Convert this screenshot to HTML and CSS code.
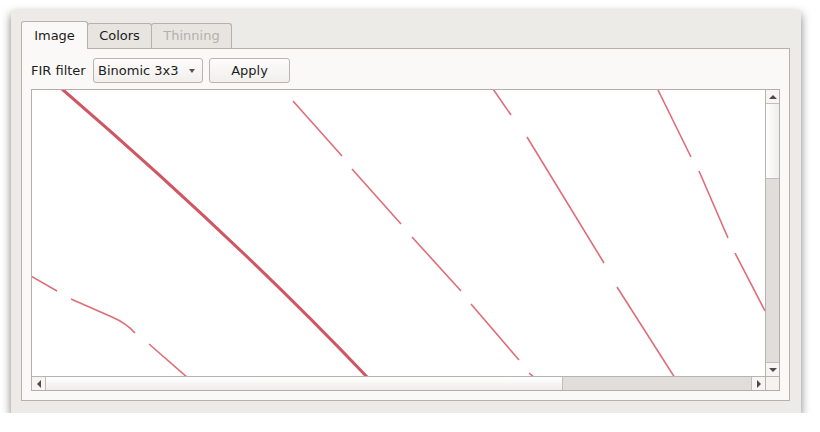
FILE: index.html
```html
<!DOCTYPE html>
<html>
<head>
<meta charset="utf-8">
<link rel="stylesheet" href="styles.css">
</head>
<body>
<div class="window">
  <div class="tabs">
    <div class="tab tab-image active">Image</div>
    <div class="tab tab-colors">Colors</div>
    <div class="tab tab-thinning disabled">Thinning</div>
  </div>
  <div class="pane">
    <div class="toolbar">
      <span class="label">FIR filter</span>
      <div class="combo"><span class="combo-text">Binomic 3x3</span><span class="caret"></span></div>
      <div class="button">Apply</div>
    </div>
    <div class="frame">
      <div class="viewport">
        <svg class="plot" width="733" height="286" viewBox="32 90 733 286">
          <path class="thick" d="M62,89 Q236,239 368,378"/>
          <g class="thin">
            <line x1="293" y1="101" x2="342" y2="156"/>
            <line x1="352" y1="169" x2="401" y2="224"/>
            <line x1="412" y1="237" x2="461" y2="291"/>
            <line x1="471" y1="304" x2="519" y2="360"/>
            <line x1="529" y1="373" x2="535" y2="378"/>
            <line x1="31" y1="276" x2="57" y2="291"/>
            <path d="M71,299 L112,317 Q126,323 135,333"/>
            <line x1="149" y1="344" x2="188" y2="378"/>
            <line x1="493" y1="89" x2="511" y2="115"/>
            <line x1="527" y1="137" x2="604" y2="263"/>
            <line x1="617" y1="287" x2="675" y2="378"/>
            <line x1="658" y1="90" x2="691" y2="157"/>
            <line x1="699" y1="171" x2="728" y2="238"/>
            <line x1="735" y1="253" x2="765" y2="311"/>
          </g>
        </svg>
      </div>
      <div class="vscroll">
        <div class="sb-btn up"><span class="arrow arrow-up"></span></div>
        <div class="v-handle"></div>
        <div class="v-track"></div>
        <div class="sb-btn down"><span class="arrow arrow-down"></span></div>
      </div>
      <div class="hscroll">
        <div class="sb-btn left"><span class="arrow arrow-left"></span></div>
        <div class="h-handle"></div>
        <div class="h-track"></div>
        <div class="sb-btn right"><span class="arrow arrow-right"></span></div>
      </div>
      <div class="corner"></div>
    </div>
  </div>
</div>
</body>
</html>
```
FILE: styles.css
```css
html, body {
  margin: 0;
  padding: 0;
  background: #ffffff;
}
body {
  font-family: "DejaVu Sans", "Liberation Sans", sans-serif;
  font-size: 13px;
  color: #1c1c1c;
}
.window {
  box-sizing: border-box;
  margin: 10px 0 0 11px;
  width: 790px;
  height: 403px;
  padding: 11px 11px 12px 10px;
  background: #edebe7;
  border-radius: 3px 3px 0 0;
  box-shadow: 0 4px 10px rgba(0, 0, 0, 0.5);
  display: flex;
  flex-direction: column;
}
.tabs {
  display: flex;
  align-items: flex-end;
  height: 27px;
  flex: none;
}
.tab {
  box-sizing: border-box;
  height: 25px;
  padding-top: 4px;
  line-height: 15px;
  text-align: center;
  border: 1px solid #b6b1ab;
  border-bottom: none;
  border-radius: 3px 3px 0 0;
  background: #e8e5e1;
  margin-left: -1px;
}
.tab-image { width: 67px; margin-left: 0; }
.tab-colors { width: 65px; }
.tab-thinning { width: 81px; }
.tab.active {
  height: 28px;
  padding-top: 6px;
  margin-bottom: -1px;
  background: #fbf9f7;
  position: relative;
  z-index: 1;
}
.tab.disabled {
  color: #b3afab;
}
.pane {
  box-sizing: border-box;
  flex: 1;
  border: 1px solid #b6b1ab;
  background: #fbf9f7;
  padding: 9px;
  display: flex;
  flex-direction: column;
  gap: 6px;
}
.toolbar {
  display: flex;
  align-items: center;
  height: 25px;
  line-height: 15px;
}
.label {
  width: 62px;
}
.combo {
  box-sizing: border-box;
  width: 110px;
  height: 25px;
  border: 1px solid #b9b4ae;
  border-radius: 3px;
  background: linear-gradient(#fdfcfb, #f1efec);
  display: flex;
  align-items: center;
  padding-left: 4px;
  padding-right: 7px;
}
.combo-text {
  flex: 1;
}
.caret {
  width: 0;
  height: 0;
  border-left: 3.5px solid transparent;
  border-right: 3.5px solid transparent;
  border-top: 4px solid #555350;
  margin-top: 1px;
}
.button {
  box-sizing: border-box;
  width: 81px;
  height: 25px;
  margin-left: 6px;
  border: 1px solid #b9b4ae;
  border-radius: 3px;
  background: linear-gradient(#fdfcfb, #f1efec);
  display: flex;
  align-items: center;
  justify-content: center;
}
.frame {
  box-sizing: border-box;
  width: 749px;
  height: 302px;
  border: 1px solid #b3aea8;
  display: grid;
  grid-template-columns: 733px 14px;
  grid-template-rows: 286px 14px;
  background: #ffffff;
}
.viewport {
  overflow: hidden;
  background: #ffffff;
}
.plot {
  display: block;
}
.thick {
  fill: none;
  stroke: #d05662;
  stroke-width: 3;
}
.thin line, .thin path {
  fill: none;
  stroke: #e06c77;
  stroke-width: 1.6;
}
.vscroll {
  box-sizing: border-box;
  border-left: 1px solid #b8b3ad;
  display: flex;
  flex-direction: column;
}
.hscroll {
  box-sizing: border-box;
  border-top: 1px solid #b8b3ad;
  display: flex;
}
.corner {
  box-sizing: border-box;
  border-left: 1px solid #b8b3ad;
  border-top: 1px solid #b8b3ad;
  background: #f5f3f0;
}
.sb-btn {
  box-sizing: border-box;
  flex: none;
  background: #f7f5f3;
  display: flex;
  align-items: center;
  justify-content: center;
}
.sb-btn.up { height: 14px; border-bottom: 1px solid #c2bdb8; }
.sb-btn.down { height: 14px; border-top: 1px solid #c2bdb8; }
.sb-btn.left { width: 14px; border-right: 1px solid #c2bdb8; }
.sb-btn.right { width: 14px; border-left: 1px solid #c2bdb8; }
.v-handle {
  box-sizing: border-box;
  height: 75px;
  flex: none;
  border-bottom: 1px solid #c2bdb8;
  background: linear-gradient(90deg, #ffffff, #efedea);
}
.v-track {
  flex: 1;
  background: #e0deda;
}
.h-handle {
  box-sizing: border-box;
  width: 517px;
  flex: none;
  border-right: 1px solid #c2bdb8;
  background: linear-gradient(#ffffff, #efedea);
}
.h-track {
  flex: 1;
  background: #e0deda;
}
.arrow {
  width: 0;
  height: 0;
}
.arrow-up {
  border-left: 4px solid transparent;
  border-right: 4px solid transparent;
  border-bottom: 4px solid #4d4b49;
}
.arrow-down {
  border-left: 4px solid transparent;
  border-right: 4px solid transparent;
  border-top: 4px solid #4d4b49;
}
.arrow-left {
  border-top: 4px solid transparent;
  border-bottom: 4px solid transparent;
  border-right: 4px solid #4d4b49;
}
.arrow-right {
  border-top: 4px solid transparent;
  border-bottom: 4px solid transparent;
  border-left: 4px solid #4d4b49;
}
```
